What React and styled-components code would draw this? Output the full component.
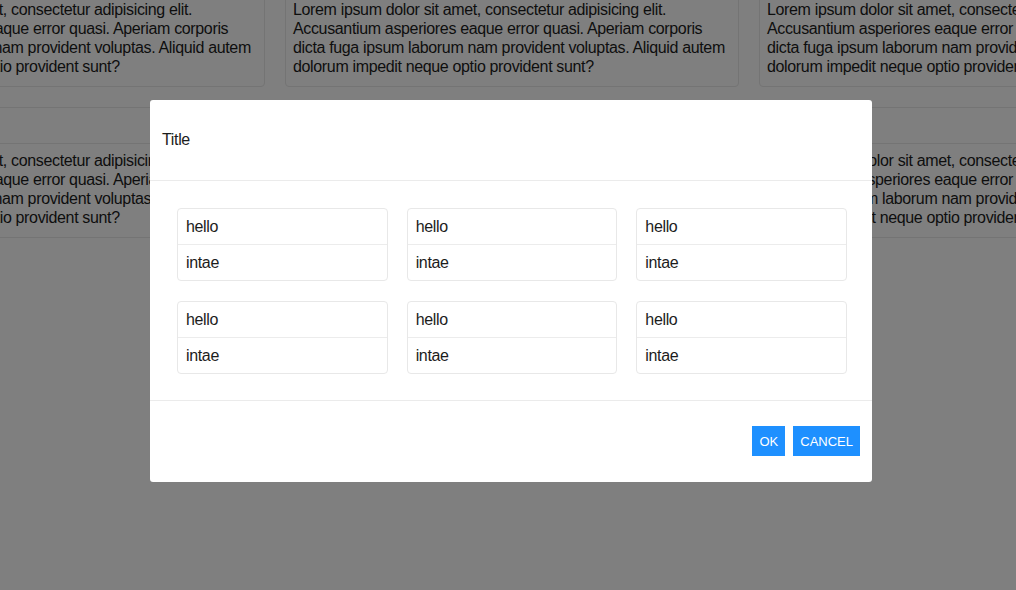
import React from "react";
import styled, { createGlobalStyle } from "styled-components";

const GlobalStyle = createGlobalStyle`
  html, body { margin: 0; padding: 0; }
  body {
    background: #fff;
    overflow: hidden;
    font-family: "Liberation Sans", Arial, "Noto Sans CJK KR", sans-serif;
    letter-spacing: -0.35px;
    color: #1c1c1c;
  }
`;

const Page = styled.div`
  height: 100vh;
  overflow: hidden;
  display: flex;
  flex-direction: column;
  gap: 20px;
  margin-top: -44px;
`;

const CardRow = styled.div`
  display: flex;
  justify-content: center;
  gap: 20px;
  padding-left: 8px;
`;

const Card = styled.div`
  flex: none;
  width: 454px;
  box-sizing: border-box;
  border: 1px solid #e8e8e8;
  border-radius: 4px;
  background: #fff;
`;

const CardHead = styled.div`
  height: 35px;
  border-bottom: 1px solid #e8e8e8;
`;

const CardBody = styled.p`
  margin: 0;
  padding: 7px 7px 10px;
  font-size: 16px;
  line-height: 19px;
`;

const Overlay = styled.div`
  position: fixed;
  inset: 0;
  background: rgba(0, 0, 0, 0.5);
`;

const Modal = styled.div`
  position: fixed;
  left: 150px;
  top: 100px;
  width: 722px;
  background: #fff;
  border-radius: 3px;
`;

const ModalHeader = styled.div`
  height: 81px;
  box-sizing: border-box;
  padding: 0 12px;
  display: flex;
  align-items: center;
  border-bottom: 1px solid #ebebeb;
  font-size: 16px;
`;

const ModalBody = styled.div`
  padding: 27px 25px 26px 27px;
  display: grid;
  grid-template-columns: repeat(3, 1fr);
  column-gap: 19px;
  row-gap: 20px;
`;

const Item = styled.div`
  border: 1px solid #e8e8e8;
  border-radius: 4px;
`;

const ItemRow = styled.div`
  height: 35px;
  padding: 0 8px;
  display: flex;
  align-items: center;
  font-size: 16px;
  & + & {
    border-top: 1px solid #ececec;
  }
`;

const ModalFooter = styled.div`
  border-top: 1px solid #ebebeb;
  padding: 25px 12px 26px;
  display: flex;
  justify-content: flex-end;
  gap: 8px;
`;

const Button = styled.button`
  height: 30px;
  padding: 0 7px;
  border: none;
  border-radius: 0;
  background: #1e90ff;
  color: #fff;
  font-family: "Liberation Sans", Arial, sans-serif;
  font-size: 13px;
  letter-spacing: 0;
  cursor: pointer;
`;

const LOREM =
  "Lorem ipsum dolor sit amet, consectetur adipisicing elit. Accusantium asperiores eaque error quasi. Aperiam corporis dicta fuga ipsum laborum nam provident voluptas. Aliquid autem dolorum impedit neque optio provident sunt?";

const rows = [0, 1];
const cols = [0, 1, 2];
const items = [0, 1, 2, 3, 4, 5];

export default function App() {
  return (
    <>
      <GlobalStyle />
      <Page>
        {rows.map((r) => (
          <CardRow key={r}>
            {cols.map((c) => (
              <Card key={c}>
                <CardHead />
                <CardBody>{LOREM}</CardBody>
              </Card>
            ))}
          </CardRow>
        ))}
      </Page>
      <Overlay />
      <Modal>
        <ModalHeader>Title</ModalHeader>
        <ModalBody>
          {items.map((i) => (
            <Item key={i}>
              <ItemRow>hello</ItemRow>
              <ItemRow>intae</ItemRow>
            </Item>
          ))}
        </ModalBody>
        <ModalFooter>
          <Button>OK</Button>
          <Button>CANCEL</Button>
        </ModalFooter>
      </Modal>
    </>
  );
}
